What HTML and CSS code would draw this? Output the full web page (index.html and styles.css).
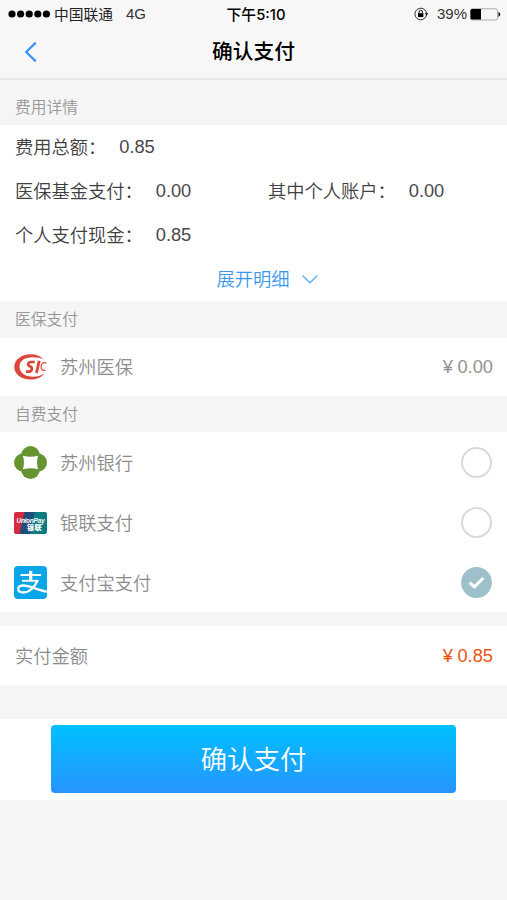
FILE: index.html
```html
<!DOCTYPE html>
<html lang="zh-CN">
<head>
<meta charset="utf-8">
<title>确认支付</title>
<link rel="stylesheet" href="styles.css">
</head>
<body>
<header class="top">
  <div class="status">
    <div class="carrier">
      <svg width="42" height="8" viewBox="0 0 42 8"><circle cx="4" cy="4" r="3.6"/><circle cx="12.6" cy="4" r="3.6"/><circle cx="21.2" cy="4" r="3.6"/><circle cx="29.8" cy="4" r="3.6"/><circle cx="38.4" cy="4" r="3.6"/></svg>
      <span class="operator">中国联通</span>
      <span class="network">4G</span>
    </div>
    <div class="clock">下午5:10</div>
    <div class="power">
      <svg class="lock" width="14" height="14" viewBox="0 0 14 14"><circle cx="6.7" cy="7" r="5.8" fill="none" stroke="#333" stroke-width="1"/><path d="M11 6.3h3.2l-1.6 2.5z"/><rect x="4" y="6.2" width="5.4" height="3.9"/><path d="M5 6.5V5a1.7 1.7 0 0 1 3.4 0v1.5" fill="none" stroke="#111" stroke-width="1"/></svg>
      <span class="percent">39%</span>
      <svg width="31" height="13" viewBox="0 0 31 13"><rect x=".5" y=".8" width="27" height="11.2" rx="2" fill="none" stroke="#aaa"/><path d="M2 1h9v10.6H2a1.5 1.5 0 0 1-1.5-1.5V2.5A1.5 1.5 0 0 1 2 1z"/><path d="M28.500 3.800q3.500 2.600 0 5.200z"/></svg>
    </div>
  </div>
  <div class="nav">
    <svg class="back" width="14" height="22" viewBox="0 0 14 22"><path d="M11.8 1.6 2.2 11l9.6 9.4" fill="none" stroke="#3894f5" stroke-width="2.2"/></svg>
    <h1>确认支付</h1>
  </div>
</header>
<main>
  <h2 class="label label-first"><span>费用详情</span></h2>
  <section class="details">
    <div class="line"><div class="pair"><span class="key">费用总额：</span><span>0.85</span></div></div>
    <div class="line"><div class="pair"><span class="key">医保基金支付：</span><span>0.00</span></div><div class="pair"><span class="key">其中个人账户：</span><span>0.00</span></div></div>
    <div class="line"><div class="pair"><span class="key">个人支付现金：</span><span>0.85</span></div></div>
    <div class="expand"><span class="key">展开明细</span><svg width="18" height="11" viewBox="0 0 18 11"><path d="M1.5 1.5 9 8.8l7.500-7.300" fill="none" stroke="#5aadf2" stroke-width="1.3"/></svg></div>
  </section>
  <h2 class="label"><span>医保支付</span></h2>
  <section class="row insurance">
    <svg class="logo" width="33" height="26" viewBox="0 0 33 26"><path d="M30 5.800C27 2.300 22.600.3 16.500.3 7.200.3.300 6 .300 13s6.900 12.500 16.200 12.500c6.200 0 11.300-2.300 14-6.300-3.100 2.300-7 3.600-11.500 3.600C11.300 22.800 5.500 18.700 5.500 12.800S10.500 3.300 18.500 3.300c4.400 0 8.600.7 11.500 2.500z" fill="#dc4539"/><path d="M20.800 8h-3.700c-3.300 0-3.800 2.900-1.700 4l1.500.9c1.900 1.200.8 4.800-2 4.800H12" fill="none" stroke="#dc4539" stroke-width="2.700"/><path d="m25.200 6.700-2.700 12.300" fill="none" stroke="#dc4539" stroke-width="2.800"/><path d="M32.400 9.300c-2.500-1.800-5 .2-5.300 3.300-.2 2.800 1.600 4.400 4.300 3.500" fill="none" stroke="#dc4539" stroke-width="1.200"/></svg>
    <span class="name">苏州医保</span><span class="amount"><span>¥</span><span>0.00</span></span>
  </section>
  <h2 class="label label-self"><span>自费支付</span></h2>
  <section class="methods">
    <div class="row">
      <svg class="logo" width="33" height="33" viewBox="0 0 33 33"><g fill="#659431"><circle cx="16.500" cy="9.300" r="9.300"/><circle cx="23.700" cy="16.500" r="9.300"/><circle cx="16.500" cy="23.700" r="9.300"/><circle cx="9.300" cy="16.500" r="9.300"/></g><path d="M8.900 9.800q7.600 2 15.200 0-2.200 6.700 0 13.400-7.600-2-15.200 0 2.200-6.700 0-13.400z" fill="#fff"/></svg>
      <span class="name">苏州银行</span><span class="radio"></span>
    </div>
    <div class="row">
      <svg class="logo" width="33" height="22" viewBox="0 0 33 22"><defs><clipPath id="card"><rect width="33" height="22" rx="2"/></clipPath></defs><g clip-path="url(#card)"><path d="M0 0h12L7 22H0z" fill="#d52b40"/><path d="M10.500 0H22l-4.500 22H5.500z" fill="#204e7b"/><path d="M20.500 0H33v22H15.800z" fill="#0b7c80"/></g><text class="union" x="2.500" y="10.500" textLength="28">UnionPay</text><text class="union-cn" x="13" y="18" textLength="14.500">银联</text></svg>
      <span class="name">银联支付</span><span class="radio"></span>
    </div>
    <div class="row">
      <svg class="logo" width="33" height="33" viewBox="0 0 33 33"><rect width="33" height="33" rx="4" fill="#0ba5e9"/><g fill="none" stroke="#fff"><path d="M6.500 9h20.500" stroke-width="2"/><path d="M16.700 4.800v10" stroke-width="3.200"/><path d="M8 14.800h16.500" stroke-width="1.900"/><path d="M23.500 14.500C21 20.500 15.800 26.500 9.500 26.500c-7 0-7-7 0-7 6.500 0 14 4.500 23.500 6.200" stroke-width="2.300"/></g></svg>
      <span class="name">支付宝支付</span>
      <svg class="checked" width="31" height="31" viewBox="0 0 31 31"><circle cx="15.500" cy="15.500" r="15.400" fill="#9dc0ca"/><path d="m8.700 15.600 4.700 4.300 8.900-8.900" fill="none" stroke="#fff" stroke-width="3"/></svg>
    </div>
  </section>
  <section class="row total"><span class="name">实付金额</span><span class="amount due"><span>¥</span><span>0.85</span></span></section>
  <section class="action"><button type="button">确认支付</button></section>
</main>
</body>
</html>
```
FILE: styles.css
```css
* { box-sizing: border-box; }
body {
  margin: 0;
  min-height: 900px;
  background: #f5f5f5;
  color: #484848;
  font-family: "Liberation Sans", "Noto Sans CJK SC", sans-serif;
  font-size: 18.250px;
}
svg { display: block; flex: none; }
h1, h2 { margin: 0; font-weight: 400; }
.top { height: 80px; background: #f7f7f7; border-bottom: 2px solid #e7e7e7; color: #000; }
.status {
  display: grid;
  grid-template-columns: 1fr auto 1fr;
  align-items: center;
  height: 28px;
  padding: 0 6px 0 8px;
  font-size: 15px;
}
.carrier, .power { display: flex; align-items: center; }
.operator { margin-left: 4px; padding-bottom: 2px; color: #222; font-size: 14.750px; }
.network { margin-left: 13px; padding-bottom: 1px; color: #333; }
.clock { padding: 0 0 2px 3px; font-family: Inter, "Noto Sans CJK SC", sans-serif; font-size: 14.800px; font-weight: 500; }
.power { justify-content: flex-end; }
.lock { margin-right: 9px; }
.percent { margin-right: 3px; padding-bottom: 1px; color: #333; font-size: 15px; }
.nav { display: grid; grid-template-columns: 80px 1fr 80px; align-items: center; height: 48px; }
.back { margin-left: 24px; }
.nav h1 { padding-bottom: 1px; text-align: center; font-size: 20.750px; font-weight: 500; line-height: 47px; }
.label {
  display: flex;
  align-items: center;
  height: 37px;
  padding: 0 15px;
  color: #979797;
  font-size: 15.750px;
}
.label span, .key, .name { padding-bottom: 2px; font-weight: 350; }
.label-first { height: 45px; padding-top: 9px; }
.label-self { height: 36px; }
.details { height: 176px; background: #fff; }
.line { display: grid; grid-template-columns: 253px 1fr; height: 44px; padding-left: 15px; }
.pair { display: flex; align-items: center; gap: 13px; white-space: nowrap; }
.key { color: #404040; }
.expand { display: flex; align-items: center; justify-content: center; gap: 11px; height: 44px; padding-left: 28px; }
.expand .key { color: #3b98ee; }
.row { display: flex; align-items: center; padding: 0 14px 0 15px; background: #fff; color: #929292; }
.name { color: #8c8c8c; }
.insurance { height: 58px; }
.logo { margin-left: -1px; margin-right: 13px; }
.amount { display: flex; gap: 4.500px; margin-left: auto; }
.methods { height: 180px; background: #fff; }
.methods .row { height: 60px; padding-top: 1px; }
.radio { width: 31px; height: 31px; margin-left: auto; margin-right: 1px; border: 2px solid #dcdad6; border-radius: 50%; }
.checked { margin-left: auto; margin-right: 1px; }
.union { fill: #fff; font: italic 700 6.500px "Liberation Sans", sans-serif; }
.union-cn { fill: #fff; font: 900 7px "Noto Sans CJK SC", sans-serif; }
.total { height: 59px; margin-top: 14px; }
.due { color: #ed5314; }
.action { display: flex; justify-content: center; height: 81px; margin-top: 34px; padding-top: 6px; background: #fff; }
.action button {
  width: 405px;
  height: 68px;
  padding: 0 0 3px;
  border: 0;
  border-radius: 4px;
  background: linear-gradient(#00c0ff, #2795ff);
  color: #fff;
  font: 350 26.500px "Noto Sans CJK SC", sans-serif;
}
```
